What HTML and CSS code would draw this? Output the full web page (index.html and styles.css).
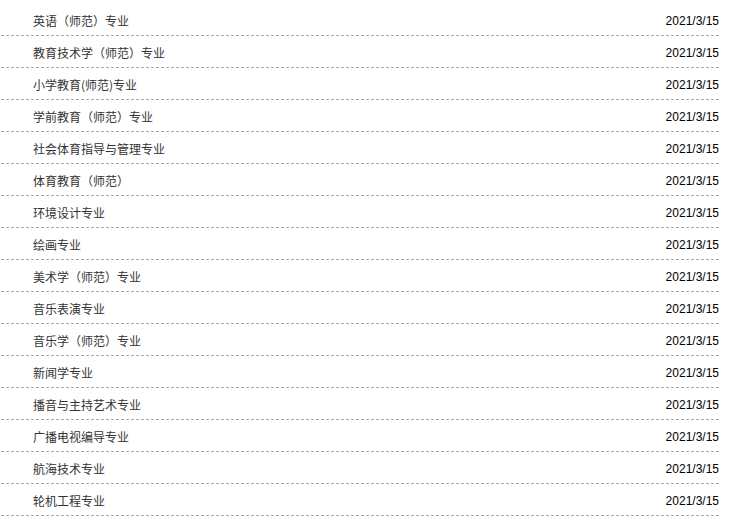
FILE: index.html
```html
<!DOCTYPE html>
<html lang="zh-CN">
<head>
<meta charset="utf-8">
<link rel="stylesheet" href="styles.css">
</head>
<body>
<ul class="list">
  <li class="row"><span class="title">英语（师范）专业</span><span class="date">2021/3/15</span></li>
  <li class="row"><span class="title">教育技术学（师范）专业</span><span class="date">2021/3/15</span></li>
  <li class="row"><span class="title">小学教育(师范)专业</span><span class="date">2021/3/15</span></li>
  <li class="row"><span class="title">学前教育（师范）专业</span><span class="date">2021/3/15</span></li>
  <li class="row"><span class="title">社会体育指导与管理专业</span><span class="date">2021/3/15</span></li>
  <li class="row"><span class="title">体育教育（师范）</span><span class="date">2021/3/15</span></li>
  <li class="row"><span class="title">环境设计专业</span><span class="date">2021/3/15</span></li>
  <li class="row"><span class="title">绘画专业</span><span class="date">2021/3/15</span></li>
  <li class="row"><span class="title">美术学（师范）专业</span><span class="date">2021/3/15</span></li>
  <li class="row"><span class="title">音乐表演专业</span><span class="date">2021/3/15</span></li>
  <li class="row"><span class="title">音乐学（师范）专业</span><span class="date">2021/3/15</span></li>
  <li class="row"><span class="title">新闻学专业</span><span class="date">2021/3/15</span></li>
  <li class="row"><span class="title">播音与主持艺术专业</span><span class="date">2021/3/15</span></li>
  <li class="row"><span class="title">广播电视编导专业</span><span class="date">2021/3/15</span></li>
  <li class="row"><span class="title">航海技术专业</span><span class="date">2021/3/15</span></li>
  <li class="row"><span class="title">轮机工程专业</span><span class="date">2021/3/15</span></li>
</ul>
</body>
</html>
```
FILE: styles.css
```css
html, body {
  margin: 0;
  padding: 0;
  background: #fff;
}
.list {
  list-style: none;
  margin: 0;
  padding: 4px 0 0 1px;
  width: 718px;
}
.row {
  display: flex;
  justify-content: space-between;
  align-items: center;
  height: 29px;
  padding: 2px 0 1px 32px;
  background-image: repeating-linear-gradient(to right, #aaa 0, #aaa 3px, transparent 3px, transparent 5px);
  background-size: 100% 1px;
  background-repeat: no-repeat;
  background-position: left bottom;
}
.title {
  font-family: "Noto Sans CJK SC", "Noto Sans", sans-serif;
  font-size: 12px;
  color: #333;
}
.date {
  font-family: "Liberation Sans", Arial, sans-serif;
  font-size: 12px;
  color: #000;
}
```
